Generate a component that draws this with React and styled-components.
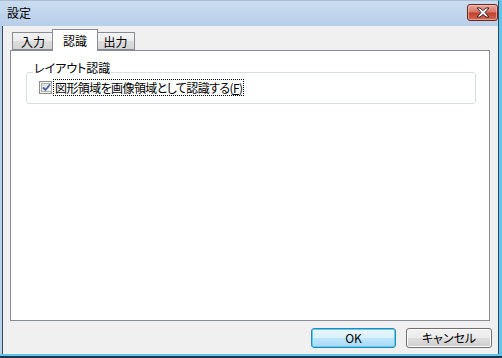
import React from "react";
import styled, { createGlobalStyle } from "styled-components";

const Global = createGlobalStyle`
  html, body { margin: 0; padding: 0; background: #fff; }
  body { font-family: "Noto Sans CJK JP", "Noto Sans", sans-serif; font-size: 12px; }
  * { box-sizing: border-box; }
`;

const Window = styled.div`
  width: 502px;
  height: 358px;
  display: flex;
  flex-direction: column;
  background: #b9d1ea;
  box-shadow: inset 0 -2px 0 #1f3550, inset 0 -4px 0 #5ec6ea, inset -3px 0 0 #5ec6ea;
  font-family: "Noto Sans CJK JP", "Noto Sans", sans-serif;
  font-feature-settings: "palt";
  font-size: 12px;
  color: #000;
`;

const TitleBar = styled.div`
  height: 26px;
  margin-right: 3px;
  display: flex;
  align-items: flex-start;
  justify-content: space-between;
  padding: 0 0 0 7px;
  background: linear-gradient(#cadcf0, #b8cfe9);
  border-right: 1px solid #34475d;
  border-top: 1px solid #a9bdd3;
`;

const Title = styled.span`
  line-height: 22px;
  padding-top: 1px;
  color: #000;
`;

const CloseButton = styled.div`
  width: 31px;
  height: 17px;
  margin-top: 3px;
  border: 1px solid #6b2520;
  border-radius: 3px;
  background: linear-gradient(#e9a99c 0%, #d8786b 45%, #c1422f 55%, #d06a52 100%);
  box-shadow: inset 0 0 0 1px rgba(255, 220, 210, 0.5);
  display: flex;
  align-items: center;
  justify-content: center;
`;

const Client = styled.div`
  flex: 1;
  margin: 0 3px 4px 2px;
  border-left: 1px solid #34475d;
  border-right: 1px solid #34475d;
  background: #f0f0f0;
  display: flex;
  flex-direction: column;
  padding: 3px 8px 6px 7px;
`;

const TabStrip = styled.div`
  display: flex;
  align-items: flex-end;
  height: 21px;
  padding-left: 2px;
  position: relative;
  z-index: 1;
`;

const Tab = styled.div`
  width: ${(p) => p.$w}px;
  height: ${(p) => (p.$active ? 22 : 18)}px;
  margin: 0 ${(p) => (p.$active ? -2 : 0)}px ${(p) => (p.$active ? -1 : 0)}px;
  border: 1px solid #898c95;
  border-bottom: ${(p) => (p.$active ? "none" : "1px solid #898c95")};
  background: ${(p) => (p.$active ? "#fff" : "linear-gradient(#f3f3f3, #ebebeb 50%, #dddddd 51%, #d5d5d5)")};
  display: flex;
  align-items: center;
  justify-content: center;
  padding-top: 1px;
  position: relative;
  z-index: ${(p) => (p.$active ? 2 : 0)};
  line-height: 12px;
`;

const Panel = styled.div`
  height: 271px;
  border: 1px solid #898c95;
  background: #fff;
  padding: 11px 13px 0 15px;
`;

const GroupBox = styled.fieldset`
  margin: 0;
  height: 42px;
  border: 1px solid #d5dfe5;
  border-radius: 3px;
  padding: 0 0 0 12px;
  min-width: 0;
`;

const Legend = styled.legend`
  padding: 0 1px 8px;
  margin-left: -6px;
  line-height: 12px;
  height: 20px;
`;

const CheckRow = styled.label`
  display: flex;
  align-items: center;
  gap: 2px;
  height: 17px;
  margin-top: -3px;
`;

const CheckBox = styled.span`
  width: 13px;
  height: 13px;
  border: 1px solid #8e8f8f;
  background: #f4f4f4;
  padding: 1px;
  display: inline-flex;
`;

const CheckInner = styled.span`
  flex: 1;
  border: 1px solid #b1b3b6;
  background: linear-gradient(135deg, #dcdcdc, #fbfbfb);
  display: flex;
  align-items: center;
  justify-content: center;
`;

const CheckText = styled.span`
  outline: 1px dotted #000;
  outline-offset: 0;
  padding: 0 1px;
  line-height: 15px;
  letter-spacing: -0.6px;
`;

const Underlined = styled.span`
  text-decoration: underline;
`;

const Spacer = styled.div`
  flex: 1;
`;

const ButtonRow = styled.div`
  display: flex;
  justify-content: flex-end;
  gap: 10px;
  margin-right: -2px;
`;

const Button = styled.button`
  width: ${(p) => p.$w}px;
  height: 20px;
  font: inherit;
  font-size: 12px;
  color: #000;
  padding: 0;
  border-radius: 3px;
  border: 1px solid ${(p) => (p.$default ? "#3c7fb1" : "#707070")};
  background: ${(p) =>
    p.$default
      ? "linear-gradient(#eaf6fd, #d9f0fc 50%, #bee6fd 51%, #a7d9f5)"
      : "linear-gradient(#f2f2f2, #ebebeb 50%, #dddddd 51%, #cfcfcf)"};
  box-shadow: ${(p) => (p.$default ? "inset 0 0 0 1px #48d8fb" : "inset 0 0 0 1px #fcfcfc")};
  line-height: 16px;
`;

function CloseIcon() {
  return (
    <svg width="14" height="11" viewBox="0 0 14 11">
      <path
        d="M1 1 L4 1 L7 3.5 L10 1 L13 1 L9 5.5 L13 10 L10 10 L7 7.5 L4 10 L1 10 L5 5.5 Z"
        fill="#fff"
        stroke="#4a2020"
        strokeWidth="1"
        strokeLinejoin="round"
      />
    </svg>
  );
}

function CheckMark() {
  return (
    <svg width="9" height="9" viewBox="0 0 9 9">
      <path d="M1 4.5 L3.5 7 L8 1.5" fill="none" stroke="#4a5f97" strokeWidth="1.8" />
    </svg>
  );
}

export default function App() {
  return (
    <>
      <Global />
      <Window>
        <TitleBar>
          <Title>設定</Title>
          <CloseButton>
            <CloseIcon />
          </CloseButton>
        </TitleBar>
        <Client>
          <TabStrip>
            <Tab $w={42}>入力</Tab>
            <Tab $w={46} $active>認識</Tab>
            <Tab $w={39}>出力</Tab>
          </TabStrip>
          <Panel>
            <GroupBox>
              <Legend>レイアウト認識</Legend>
              <CheckRow>
                <CheckBox>
                  <CheckInner>
                    <CheckMark />
                  </CheckInner>
                </CheckBox>
                <CheckText>
                  図形領域を画像領域として認識する(<Underlined>F</Underlined>)
                </CheckText>
              </CheckRow>
            </GroupBox>
          </Panel>
          <Spacer />
          <ButtonRow>
            <Button $w={85} $default>OK</Button>
            <Button $w={86}>キャンセル</Button>
          </ButtonRow>
        </Client>
      </Window>
    </>
  );
}
